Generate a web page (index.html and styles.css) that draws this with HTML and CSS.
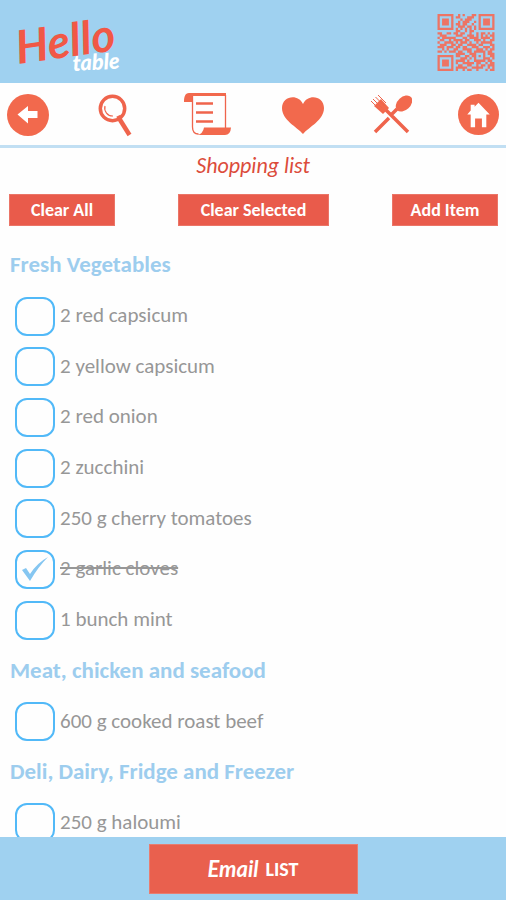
FILE: index.html
```html
<!DOCTYPE html>
<html lang="en">
<head>
<meta charset="utf-8">
<title>Hello Table – Shopping list</title>
<link rel="stylesheet" href="styles.css">
</head>
<body>
<div class="app">
  <header class="header">
    <svg class="logo" viewBox="0 0 112 66" role="img" aria-label="Hello table">
      <text class="logo-hello" transform="translate(8 54) rotate(-8)" textLength="100" lengthAdjust="spacingAndGlyphs">Hello</text>
      <text class="logo-table" transform="translate(63 61) rotate(-3)" textLength="47" lengthAdjust="spacingAndGlyphs">table</text>
    </svg>
    <svg class="qr" viewBox="0 0 25 25" id="qr"></svg>
  </header>
  <nav class="toolbar">
    <svg class="icon" viewBox="0 0 42 42"><circle cx="21" cy="21" r="21"/><path class="w" d="M10.500 20.500 21 12v5h9.500v7H21v5.500z"/></svg>
    <svg class="icon i-search" viewBox="0 0 34 43"><circle class="ln" cx="14.500" cy="14.500" r="12.200" stroke-width="3.500"/><path class="ln" d="M7 12a8 8 0 0 0 8 10" stroke-width="1.200"/><path class="ln" d="m19 24 4-2" stroke-width="3"/><path class="ln" d="m21.500 25 10 16" stroke-width="4.500"/></svg>
    <svg class="icon i-list" viewBox="0 0 48 43"><path d="M5 0h37v3H9v6H0C0 4 1 0 5 0z"/><path class="ln" d="M8.500 3v31q0 7 6 7M41.500 2v33" stroke-width="1.300"/><path class="ln" d="M12 10.500h17M12 19.500h17M12 28.500h17" stroke-width="2.500"/><path d="M20 34.500h27q-.500 7.500-6 7.500H13q6-1 7-7.500z"/></svg>
    <svg class="icon i-heart" viewBox="0 0 42 37"><path d="M21 37C15 30 0 23 0 11 0-1 16-4 21 7 26-4 42-1 42 11c0 12-15 19-21 26z"/></svg>
    <svg class="icon i-cutlery" viewBox="0 0 42 39"><path class="ln" d="m5 37 14-14M22 19l5-5M15 14l23 23" stroke-width="3.500"/><ellipse cx="34" cy="8.500" rx="9.500" ry="6.500" transform="rotate(-43 34 8.500)"/><path d="m4 11 9 8 6-6-8-9z"/><path class="ln" d="m1 6 9 9M3 4l9 9M5.500 2l9 9M8 0l8 8" stroke-width="1"/></svg>
    <svg class="icon i-home" viewBox="0 0 42 42"><circle cx="21" cy="21" r="21"/><path class="w" d="m9.500 21 3.500-4v-6h4v2l4-4 11.500 12H29v13h-4.500v-9h-7v9H13V21z"/></svg>
  </nav>
  <h1 class="title"><span>Shopping list</span></h1>
  <div class="actions">
    <button class="btn"><span>Clear All</span></button>
    <button class="btn wide"><span>Clear Selected</span></button>
    <button class="btn"><span>Add Item</span></button>
  </div>
  <main class="list">
    <h2>Fresh Vegetables</h2>
    <label class="item"><i class="box"></i><span>2 red capsicum</span></label>
    <label class="item"><i class="box"></i><span>2 yellow capsicum</span></label>
    <label class="item"><i class="box"></i><span>2 red onion</span></label>
    <label class="item"><i class="box"></i><span>2 zucchini</span></label>
    <label class="item"><i class="box"></i><span>250 g cherry tomatoes</span></label>
    <label class="item done"><i class="box"><svg viewBox="0 0 28 26"><path d="m1 14 4-2 4 6Q16 7 27 1 17 11 9 25z"/></svg></i><span>2 garlic cloves</span></label>
    <label class="item"><i class="box"></i><span>1 bunch mint</span></label>
    <h2>Meat, chicken and seafood</h2>
    <label class="item"><i class="box"></i><span>600 g cooked roast beef</span></label>
    <h2>Deli, Dairy, Fridge and Freezer</h2>
    <label class="item"><i class="box"></i><span>250 g haloumi</span></label>
  </main>
  <footer class="footer">
    <button class="email"><span class="script">Email</span><span>LIST</span></button>
  </footer>
</div>
<script src="qr.js"></script>
</body>
</html>
```
FILE: styles.css
```css
* { box-sizing: border-box; }
body { margin: 0; background: #fff; font-family: Carlito, Calibri, Lato, sans-serif; }
.app { width: 506px; height: 900px; display: flex; flex-direction: column; overflow: hidden; background: #fefefe; }
.header { height: 83px; flex: none; background: #9fd1f0; display: flex; justify-content: space-between; padding: 10px 11px 0 10px; }
.logo { width: 112px; height: 66px; overflow: visible; }
.logo-hello { font: italic 700 46px Lato, sans-serif; fill: #f15846; }
.logo-table { font: italic 900 22px Lato, sans-serif; fill: #fff; }
.qr { width: 58px; height: 57px; margin-top: 4px; fill: #ed7464; }
.toolbar { height: 65px; flex: none; border-bottom: 3px solid #c1dff3; display: flex; justify-content: space-between; align-items: flex-start; padding: 11px 7px 0; }
.icon { width: 42px; height: 42px; fill: #f2694d; flex: none; display: block; }
.icon .w { fill: #fff; }
.ln { fill: none; stroke: #ef644c; }
.i-search { width: 34px; height: 43px; margin-left: 8px; }
.i-list { width: 48px; height: 43px; margin-left: 11px; margin-top: -1px; }
.i-heart { height: 37px; margin: 3px 0 0 8px; }
.i-cutlery { height: 39px; margin-top: 1px; margin-left: 5px; }
.i-home { width: 41px; height: 41px; margin-left: 5px; }
.title { margin: 0; height: 46px; flex: none; font-size: 22px; line-height: 35px; font-weight: 400; font-style: italic; color: #dc4c3b; text-align: center; }
.actions { height: 45px; flex: none; display: flex; justify-content: space-between; align-items: flex-start; padding: 0 8px 0 9px; }
.btn { width: 106px; height: 32px; border: 1px solid #eb7567; background: #e95b4b; color: #fff; font: 700 18px Carlito, Calibri, Lato, sans-serif; padding: 0; }
.wide { width: 151px; }
.list { flex: 1; min-height: 0; overflow: hidden; padding-left: 10px; }
h2 { height: 50.7px; margin: 0; line-height: 51px; font-size: 23px; color: #9dcdee; white-space: nowrap; }
.item { height: 50.7px; display: flex; align-items: center; padding-left: 5px; font-size: 21px; color: #979797; white-space: nowrap; }
.box { width: 40px; height: 39px; border: 2px solid #51b9f8; border-radius: 12px; margin-right: 5px; display: flex; align-items: center; justify-content: center; margin-top: 2px; }
.box svg { width: 28px; height: 26px; fill: #85c6f1; }
.done span { text-decoration: line-through; }
.footer { height: 63px; flex: none; background: #9fd1f0; display: flex; justify-content: center; align-items: center; }
.email { width: 209px; height: 50px; border: 1px solid #e77d70; background: #e9604e; color: #fff; font: 700 20px Carlito, Calibri, Lato, sans-serif; display: flex; align-items: center; justify-content: center; gap: 7px; }
.script { font: italic 700 22px Lato, sans-serif; }
```
FILE: qr.js
```js
const rows = [
"1111111001010001101111111",
"1000001011000111001000001",
"1011101000101110001011101",
"1011101001011100101011101",
"1011101011011001001011101",
"1000001001110110101000001",
"1111111010101010101111111",
"0000000011001011000000000",
"1100110110110010010110101",
"0111000011100111010101011",
"1011111100011011110111101",
"0110010111101100111010011",
"1001111010111010010111110",
"0111001101100111101100011",
"1110111011011001110011101",
"0010100110011110011101011",
"1101011101100110111110110",
"0000000011110011100010111",
"1111111011001101101010011",
"1000001000111010100011101",
"1011101011110100111110110",
"1011101010011111011001011",
"1011101001100110010110111",
"1000001011111001111100101",
"1111111010010110010001011"];
document.getElementById('qr').innerHTML = '<path d="' + rows.map((r, y) => [...r].map((c, x) => c === '1' ? `M${x} ${y}h1v1h-1z` : '').join('')).join('') + '"/>';
```
